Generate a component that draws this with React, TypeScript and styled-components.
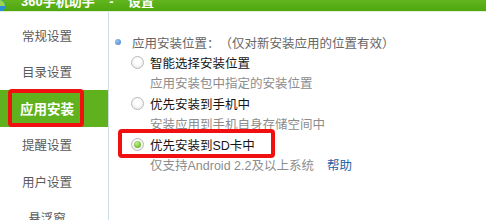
import React from "react";
import styled, { createGlobalStyle, css } from "styled-components";

const GlobalStyle = createGlobalStyle`
  html, body { margin: 0; padding: 0; background: #ffffff; overflow: hidden; }
  body {
    font-family: "Liberation Sans", "Noto Sans CJK SC", sans-serif;
    -webkit-font-smoothing: antialiased;
  }
`;

const Window = styled.div`
  width: 486px;
  height: 220px;
  display: flex;
  flex-direction: column;
  overflow: hidden;
  background: #ffffff;
`;

const TitleBar = styled.div`
  height: 11px;
  flex: none;
  display: flex;
  align-items: flex-end;
  gap: 15px;
  overflow: hidden;
  background: linear-gradient(#62b51f, #4ea60d);
  border-bottom: 1px solid #e4efd9;
`;

const Logo = styled.svg`
  width: 14px;
  height: 14px;
  margin-left: -8px;
  margin-bottom: -2px;
  flex: none;
`;

const Title = styled.span`
  font-size: 13px;
  line-height: 13px;
  margin-bottom: 3px;
  color: #ffffff;
  font-weight: bold;
  white-space: pre;
`;

const Main = styled.div`
  flex: 1;
  display: flex;
  min-height: 0;
`;

const Sidebar = styled.nav`
  width: 108px;
  flex: none;
  border-right: 1px solid #cfdde6;
  padding-top: 5px;
  display: flex;
  flex-direction: column;
`;

const NavItem = styled.div<{ $active?: boolean }>`
  height: 36.5px;
  flex: none;
  display: flex;
  align-items: center;
  justify-content: center;
  padding-right: 14px;
  font-size: 12.5px;
  color: #5a5a5a;
  ${(p) =>
    p.$active &&
    css`
      background: #5fb21e;
      color: #ffffff;
      font-weight: bold;
      font-size: 13.5px;
    `}
`;

const Marked = styled.span`
  position: relative;
  &::after {
    content: "";
    position: absolute;
    left: -12px;
    right: -10px;
    top: -9px;
    bottom: -9px;
    border: 4px solid #f01010;
    border-radius: 4px;
  }
`;

const Content = styled.section`
  flex: 1;
  padding: 20px 0 0 6px;
  display: flex;
  flex-direction: column;
`;

const Heading = styled.div`
  height: 20px;
  display: flex;
  align-items: center;
  gap: 11px;
  font-size: 12.5px;
  color: #666666;
  white-space: nowrap;
`;

const HeadingText = styled.span`
  display: flex;
  align-items: center;
`;

const Punct = styled.span<{ $align: "left" | "center" | "right" }>`
  display: inline-block;
  width: 12.5px;
  text-align: ${(p) => p.$align};
`;

const Bullet = styled.span`
  width: 6px;
  height: 6px;
  border-radius: 50%;
  flex: none;
  background: radial-gradient(circle at 35% 35%, #9cc4ee, #3d7fcf);
`;

const Option = styled.div`
  margin-left: 16px;
  display: flex;
  flex-direction: column;
`;

const OptionRow = styled.label<{ $marked?: boolean }>`
  height: 20.5px;
  display: flex;
  align-items: center;
  gap: 6px;
  font-size: 12.5px;
  color: #161616;
  white-space: nowrap;
  position: relative;
  ${(p) =>
    p.$marked &&
    css`
      &::after {
        content: "";
        position: absolute;
        left: -13px;
        width: 157px;
        top: -5px;
        bottom: -3px;
        box-sizing: border-box;
        border: 4px solid #f01010;
        border-radius: 4px;
      }
    `}
`;

const Radio = styled.span<{ $checked?: boolean }>`
  width: 13px;
  height: 13px;
  box-sizing: border-box;
  border-radius: 50%;
  flex: none;
  border: 1px solid #b9b9b9;
  background: radial-gradient(circle at 50% 40%, #ffffff 30%, #e4e4e4 100%);
  display: flex;
  align-items: center;
  justify-content: center;
  ${(p) =>
    p.$checked &&
    css`
      &::before {
        content: "";
        width: 7px;
        height: 7px;
        border-radius: 50%;
        background: radial-gradient(circle at 40% 35%, #c6ec9c, #6fbf2a 70%);
      }
    `}
`;

const Desc = styled.div`
  height: 20.5px;
  display: flex;
  align-items: center;
  gap: 13px;
  margin-left: 19px;
  font-size: 12.5px;
  color: #8c8c8c;
  white-space: nowrap;
`;

const HelpLink = styled.a`
  color: #1f5fa6;
  text-decoration: none;
`;

const navItems = ["常规设置", "目录设置", "应用安装", "提醒设置", "用户设置", "悬浮窗"];

const options = [
  { label: "智能选择安装位置", desc: "应用安装包中指定的安装位置" },
  { label: "优先安装到手机中", desc: "安装应用到手机自身存储空间中" },
  { label: "优先安装到SD卡中", desc: "仅支持Android 2.2及以上系统", checked: true, help: true },
];

export default function App() {
  return (
    <>
      <GlobalStyle />
      <Window>
        <TitleBar>
          <Logo viewBox="0 0 14 14">
            <circle cx="7" cy="7" r="6.5" fill="#2a8fd8" />
            <path d="M7 1 A6 6 0 0 1 13 7 L7 7 Z" fill="#9bd64a" />
          </Logo>
          <Title>{"360手机助手    -    设置"}</Title>
        </TitleBar>
        <Main>
          <Sidebar>
            {navItems.map((item) => (
              <NavItem key={item} $active={item === "应用安装"}>
                {item === "应用安装" ? <Marked>{item}</Marked> : item}
              </NavItem>
            ))}
          </Sidebar>
          <Content>
            <Heading>
              <Bullet />
              <HeadingText>
                应用安装位置
                <Punct $align="center">：</Punct>
                <Punct $align="right">（</Punct>
                仅对新安装应用的位置有效
                <Punct $align="left">）</Punct>
              </HeadingText>
            </Heading>
            {options.map((o) => (
              <Option key={o.label}>
                <OptionRow $marked={o.checked}>
                  <Radio $checked={o.checked} />
                  {o.label}
                </OptionRow>
                <Desc>
                  {o.desc}
                  {o.help && <HelpLink href="#">帮助</HelpLink>}
                </Desc>
              </Option>
            ))}
          </Content>
        </Main>
      </Window>
    </>
  );
}
